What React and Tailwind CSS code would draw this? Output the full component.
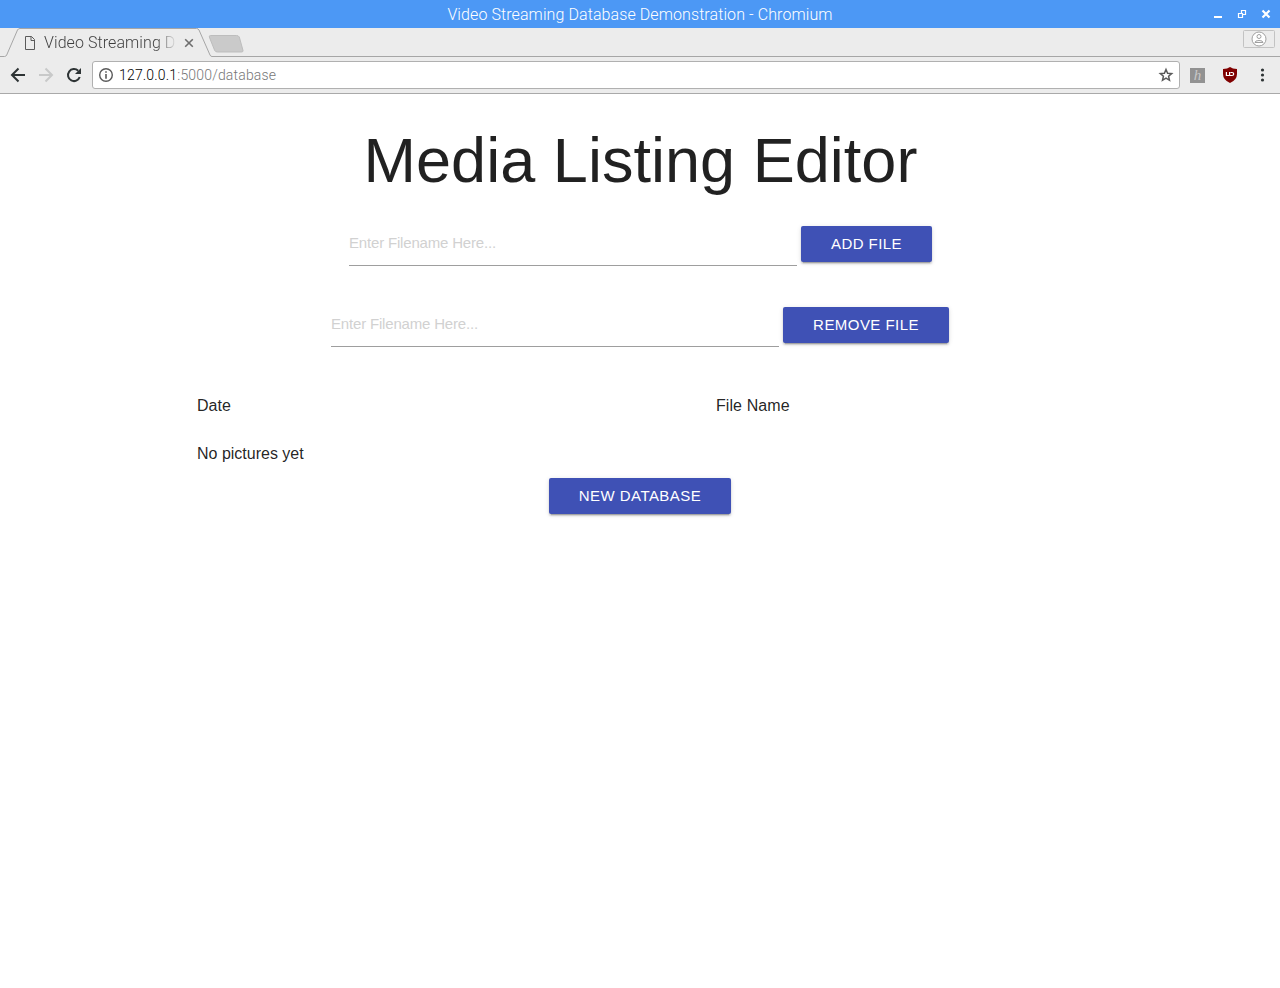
import React from "react";

function TitleBar() {
  return (
    <div className="relative flex h-7 items-center justify-center bg-[#4c98f5] pt-[2px] font-['Roboto',sans-serif] text-[16px] font-light text-white">
      <span className="tracking-[0.09px] whitespace-nowrap">Video Streaming Database Demonstration - Chromium</span>
      <svg className="absolute top-0 right-0" width="80" height="28" viewBox="0 0 80 28" fill="none" stroke="#fff">
        <path d="M14 17H22" strokeWidth="2" />
        <path d="M41.500 13V10.500H45.500V14.500H43M38.500 13.500H42.500V17.500H38.500Z" strokeWidth="1.200" />
        <path d="M62.500 10.500L69.500 17.500M69.500 10.500L62.500 17.500" strokeWidth="2.200" />
      </svg>
    </div>
  );
}

function TabStrip() {
  return (
    <div className="relative h-[29px] bg-[#ececec]">
      <svg className="absolute inset-0" width="1280" height="29" viewBox="0 0 1280 29" fill="none">
        <path d="M0 28.500H4.500Q6 28.500 6.700 27L17.500 2Q18.300 .500 20 .500H196.500Q198.300 .500 199 2L210 27Q210.700 28.500 212 28.500H1280" stroke="#a6a6a6" />
        <path d="M210.500 7.500H236.500Q238.500 7.500 239.300 9L243 22.500Q243.300 24 241.500 24H217.500Q215.500 24 214.700 22.500L209.300 9Q209 7.500 210.500 7.500Z" fill="#cacaca" stroke="#bdbdbd" />
        <g stroke="#5a5a5a">
          <path d="M25.500 8.500H31.500L34.500 11.500V21.500H25.500Z" />
          <path d="M31 8.500V12.500H35" />
        </g>
        <path d="M185.200 11.200L192.800 18.800M192.800 11.200L185.200 18.800" stroke="#6e6e6e" strokeWidth="1.600" />
        <rect x="1243.500" y="2.500" width="31" height="17" rx="1" stroke="#c3c3c3" />
        <circle cx="1259" cy="11" r="7" fill="#fff" stroke="#a0a0a0" />
        <circle cx="1259" cy="8.500" r="2" stroke="#a0a0a0" />
        <path d="M1255 14.500Q1255 12.500 1259 12.500T1263 14.500Z" stroke="#a0a0a0" />
      </svg>
      <div className="relative ml-[44px] h-[29px] w-[133px] overflow-hidden bg-linear-to-r from-[#3c3c3c] from-85% to-transparent bg-clip-text pt-px font-['Roboto',sans-serif] text-[16px] leading-7 font-light tracking-[0.08px] whitespace-nowrap text-transparent">
        Video Streaming D
      </div>
    </div>
  );
}

function Toolbar() {
  return (
    <div className="flex h-[37px] items-center border-b border-[#a9a9a9] bg-[#ececec]">
      <svg className="shrink-0" width="92" height="36" viewBox="0 0 92 36" fill="none" strokeWidth="2">
        <path d="M25 18H12.500M18.500 11.500L12 18L18.500 24.500" stroke="#2d3334" />
        <path d="M39 18H51.500M45.500 11.500L52 18L45.500 24.500" stroke="#c8c9c9" />
        <path d="M78.200 13.800A6 6 0 1 0 79.700 20" stroke="#2d3334" />
        <path d="M81 11V17H75Z" fill="#2d3334" />
      </svg>
      <div className="flex h-7 w-[1088px] items-center rounded-[3px] border border-[#b0b0b0] bg-white px-[5px]">
        <svg className="shrink-0" width="16" height="16" viewBox="0 0 16 16" fill="none" stroke="#5a5a5a">
          <circle cx="8" cy="8" r="6.300" strokeWidth="1.400" />
          <path d="M8 4.200V5.800M8 7V11.800" strokeWidth="1.600" />
        </svg>
        <span className="ml-[5px] flex-1 font-['Roboto',sans-serif] text-[14px] font-light tracking-[0.18px] text-[#777]">
          <span className="text-black">127.0.0.1</span>:5000/database
        </span>
        <svg className="shrink-0" width="16" height="16" viewBox="0 0 16 16" fill="none" stroke="#5a5a5a" strokeWidth="1.500">
          <path d="M8 2.500L9.600 6.300L13.700 6.600L10.600 9.300L11.500 13.300L8 11.200L4.500 13.300L5.400 9.300L2.300 6.600L6.400 6.300Z" />
        </svg>
      </div>
      <div className="ml-[10px] flex h-[15px] w-[15px] items-center justify-center bg-[#929292] font-['Liberation_Serif',serif] text-[15px] leading-none text-[#c9c9c9] italic">
        h
      </div>
      <svg className="ml-[18px]" width="14" height="16" viewBox="0 0 14 16" fill="none">
        <path d="M7 0Q9.500 1.800 14 2V7Q14 13 7 16Q0 13 0 7V2Q4.500 1.800 7 0Z" fill="#800000" />
        <path d="M3.400 5V8.500H6.600V5M7.500 5.500H9Q10.700 5.500 10.700 7T9 8.500H6.500" stroke="#fff" strokeWidth="1.200" />
      </svg>
      <svg className="ml-[23px]" width="5" height="16" viewBox="0 0 5 16" fill="#2d3334">
        <circle cx="2.500" cy="3" r="1.600" />
        <circle cx="2.500" cy="8" r="1.600" />
        <circle cx="2.500" cy="13" r="1.600" />
      </svg>
    </div>
  );
}

function Button({ children, width }) {
  return (
    <button className={`h-9 rounded-[2px] bg-[#3f51b5] text-center text-[15px] leading-9 tracking-[0.45px] whitespace-nowrap text-white uppercase shadow-[0_2px_2px_0_rgba(0,0,0,0.14),0_1px_5px_0_rgba(0,0,0,0.12),0_3px_1px_-2px_rgba(0,0,0,0.2)] ${width}`}>
      {children}
    </button>
  );
}

function FileForm({ action, width }) {
  return (
    <form className="flex h-[81px] items-start justify-center gap-1" onSubmit={(e) => e.preventDefault()}>
      <input
        type="text"
        placeholder="Enter Filename Here..."
        className="-mt-[5px] h-[45px] w-[448px] border-b border-[#9e9e9e] bg-transparent pb-[2px] text-[15px] tracking-[-0.18px] outline-none placeholder:text-[#d1d1d1]"
      />
      <Button width={width}>{action}</Button>
    </form>
  );
}

export default function App() {
  return (
    <div className="flex h-[988px] w-[1280px] flex-col overflow-hidden bg-white">
      <TitleBar />
      <TabStrip />
      <Toolbar />
      <main className="flex-1 font-['Liberation_Sans',Arial,sans-serif] text-black/87">
        <h1 className="pt-[32px] pb-[31px] pl-px text-center text-[63px] leading-[69px] tracking-[0.03px]">Media Listing Editor</h1>
        <div className="pl-px">
          <FileForm action="Add File" width="w-[131px]" />
        </div>
        <FileForm action="Remove File" width="w-[166px]" />
        <div className="mx-auto grid w-[896px] grid-cols-[519px_1fr] pt-[6px] pl-[5px] text-[16px] leading-6">
          <div className="h-12">Date</div>
          <div className="h-12 tracking-[0.08px]">File Name</div>
          <div className="h-9">No pictures yet</div>
        </div>
        <div className="flex justify-center">
          <Button width="w-[182px]">New Database</Button>
        </div>
      </main>
    </div>
  );
}
